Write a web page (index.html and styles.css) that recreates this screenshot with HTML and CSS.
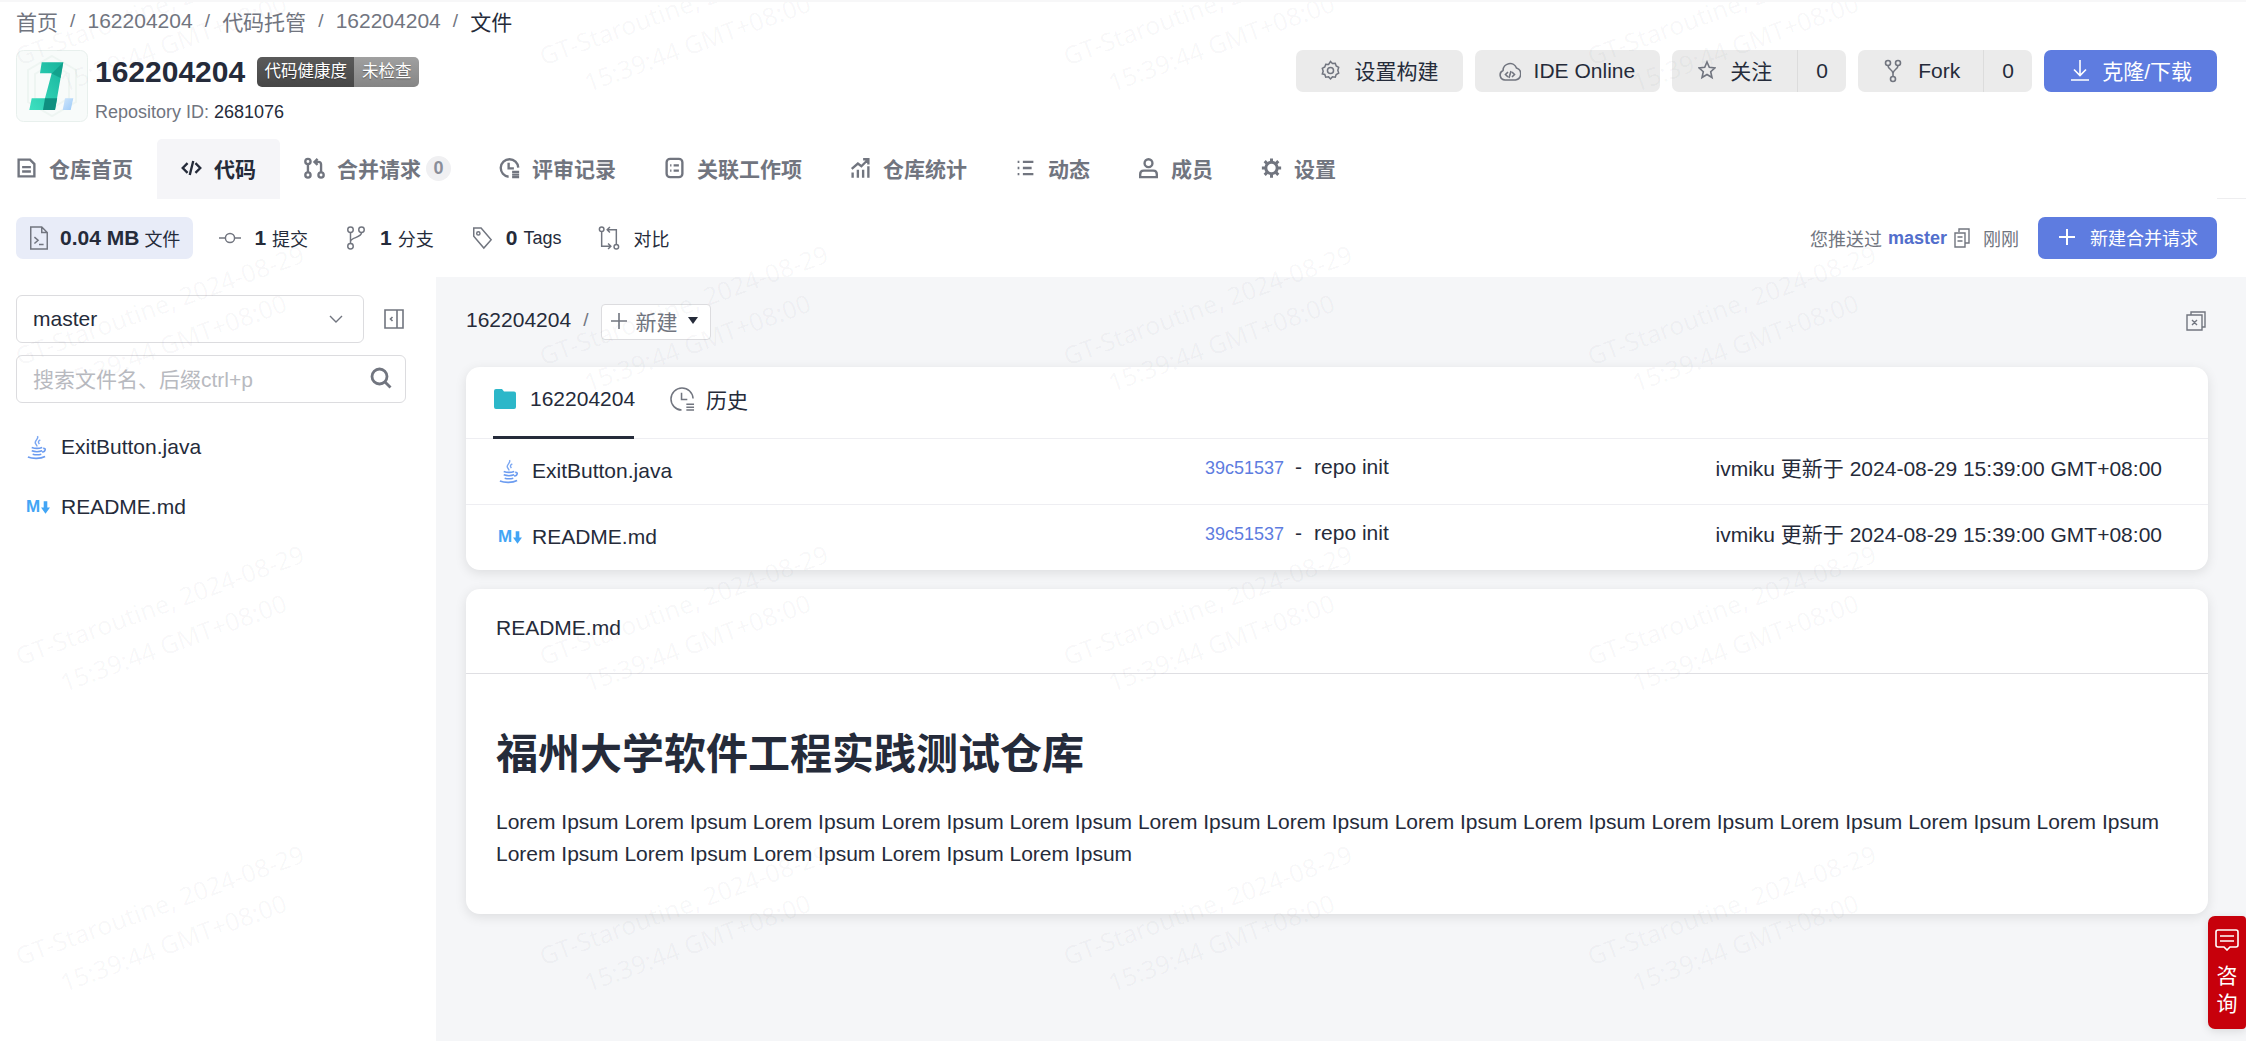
FILE: index.html
```html
<!DOCTYPE html>
<html lang="zh-CN">
<head>
<meta charset="utf-8">
<title>162204204</title>
<link rel="stylesheet" href="styles.css">
</head>
<body>
<div class="page">
  <header class="repo-head">
    <nav class="crumbs">
      <span>首页</span><i>/</i><span>162204204</span><i>/</i><span>代码托管</span><i>/</i><span>162204204</span><i>/</i><span class="here">文件</span>
    </nav>
    <div class="title-row">
      <svg class="logo" viewBox="0 0 72 72">
        <defs>
          <linearGradient id="lg1" x1="0" y1="1" x2="1" y2="0"><stop offset="0" stop-color="#3ee0c0"/><stop offset="1" stop-color="#16b39c"/></linearGradient>
          <linearGradient id="lg2" x1="0" y1="0" x2="1" y2="1"><stop offset="0" stop-color="#cfe6fc"/><stop offset="1" stop-color="#9ccaf8"/></linearGradient>
        </defs>
        <rect x=".5" y=".5" width="71" height="71" rx="7" fill="#f8fbfa" stroke="#e8f0ed"/>
        <path d="M36 6 60 20V52L36 66 12 52V20Z" fill="none" stroke="#eef5f2" stroke-width="2"/>
        <path d="M36 14 53 24V48L36 58 19 48V24Z" fill="none" stroke="#eef5f2" stroke-width="2"/>
        <path d="M25.7 12.3H47.3L39 60H13.3L15.7 48.3H29L35.7 23.3H24Z" fill="url(#lg1)"/>
        <path d="M36 23.3 47.3 12.3 44.6 28 35 23.3Z" fill="#0f9a86" opacity=".75"/>
        <path d="M29 48.3H41.2L39 60H27Z" fill="#0f8f80"/>
        <path d="M49 48.3H57.3L54.7 60H46.7Z" fill="url(#lg2)"/>
      </svg>
      <div class="repo-info">
        <div class="name-line">
          <h2 class="repo-name">162204204</h2>
          <span class="health"><b>代码健康度</b><em>未检查</em></span>
        </div>
        <div class="repo-id">Repository ID: <span>2681076</span></div>
      </div>
      <div class="actions">
        <a class="btn b-build"><svg class="bi gear" viewBox="0 0 20 22"><path d="M10 1.5l2 2.2 3-.3 1 2.8 2.6 1.6-.9 2.9.9 3-2.6 1.5-1 2.8-3-.3-2 2.2-2-2.2-3 .3-1-2.8L1.400 14.700l.9-3-.9-2.900L4 7.200l1-2.800 3 .3z"/><circle cx="10" cy="11" r="3.200"/></svg>设置构建</a>
        <a class="btn b-ide"><svg class="bi ide" viewBox="0 0 22 24"><path d="M6 21a5 5 0 0 1-2-9.500A7 7 0 0 1 17.500 9 6.200 6.200 0 0 1 16.500 21z"/><path d="M9 13l-2.500 2.500L9 18M13 13l2.500 2.500L13 18M12 12l-2 7"/></svg>IDE Online</a>
        <div class="btn split">
          <a class="s-main b-star"><svg class="bi star" viewBox="0 0 18 20"><path d="M9 2l2.300 5.300 5.700.6-4.300 3.800 1.300 5.800L9 14.500l-5 3 1.300-5.800L1 7.900l5.700-.6z"/></svg>关注</a>
          <span class="s-count">0</span>
        </div>
        <div class="btn split">
          <a class="s-main b-fork"><svg class="bi fork" viewBox="0 0 18 24"><circle cx="4" cy="4" r="2.500"/><circle cx="14" cy="4" r="2.500"/><circle cx="9" cy="20" r="2.500"/><path d="M4 6.500c0 4 5 4 5 8v3M14 6.500c0 4-5 4-5 8"/></svg>Fork</a>
          <span class="s-count">0</span>
        </div>
        <a class="btn primary b-clone"><svg class="bi dl" viewBox="0 0 20 22"><path d="M10 1v15M4 10.500l6 6 6-6M1 21h18"/></svg>克隆/下载</a>
      </div>
    </div>
  </header>

  <nav class="tabs">
    <a class="tab"><svg class="ti" viewBox="0 0 24 24"><path d="M3 2.500h13l5 5v14H3zM7 11h10M7 16h10"/></svg>仓库首页</a>
    <a class="tab active"><svg class="ti" viewBox="0 0 24 24"><path d="M7.500 6.500 2 12l5.500 5.500M16.500 6.500 22 12l-5.500 5.500M14 4l-4 16"/></svg>代码</a>
    <a class="tab"><svg class="ti" viewBox="0 0 24 24"><circle cx="4.500" cy="4.500" r="3"/><circle cx="4.500" cy="20" r="3"/><circle cx="19.500" cy="20" r="3"/><path d="M4.500 7.500V17M19.500 17V8q0-3-3-3h-3M15.500 1.500 12 5l3.500 3.500"/></svg>合并请求<span class="pill">0</span></a>
    <a class="tab"><svg class="ti" viewBox="0 0 24 24"><path d="M22 11.500A10 10 0 1 0 11 22"/><path d="M11 6v6.500h6M15 16.500h8M15 19.500h8M15 22.500h8"/></svg>评审记录</a>
    <a class="tab"><svg class="ti" viewBox="0 0 24 24"><rect x="3" y="1.500" width="18" height="21" rx="4"/><path d="M7 9h1.500M11 9h6M7 15h1.500M11 15h6"/></svg>关联工作项</a>
    <a class="tab"><svg class="ti" viewBox="0 0 24 24"><path d="M3 23v-6M9 23v-9M15 23v-9M21 23V10M2 13l7-6 4 3 8-8M15 2h6v6"/></svg>仓库统计</a>
    <a class="tab"><svg class="ti" viewBox="0 0 24 24"><path d="M3 5h2M3 12h2M3 19h2M9 5h12M9 12h10M9 19h12"/></svg>动态</a>
    <a class="tab"><svg class="ti" viewBox="0 0 24 24"><circle cx="12" cy="6.500" r="4.500"/><path d="M2.500 22.500V19q0-4 4-4h11q4 0 4 4v3.500z"/></svg>成员</a>
    <a class="tab"><svg class="ti cog" viewBox="0 0 24 24"><circle cx="12" cy="12" r="6.500"/><path d="M12 1v4M12 19v4M1 12h4M19 12h4M4.200 4.200 7 7M17 17l2.800 2.800M4.200 19.800 7 17M17 7l2.800-2.800"/></svg>设置</a>
  </nav>

  <div class="subbar">
    <a class="chip"><svg class="si" viewBox="0 0 24 26"><path d="M3 1h12l6 6v18H3zM15 1v6h6M7 12l4 3.500L7 19M12 20h5"/></svg><b>0.04 MB</b><span>文件</span></a>
    <a class="stat"><svg class="si" viewBox="0 0 24 24"><circle cx="12" cy="12" r="5"/><path d="M0 12h7M17 12h7"/></svg><b>1</b><span>提交</span></a>
    <a class="stat"><svg class="si" viewBox="0 0 24 26"><circle cx="6" cy="4" r="3"/><circle cx="18" cy="4" r="3"/><circle cx="6" cy="22" r="3"/><path d="M6 7v12M18 7c0 6-12 5-12 10"/></svg><b>1</b><span>分支</span></a>
    <a class="stat"><svg class="si" viewBox="0 0 24 26"><path d="M3 2h8l11 13-8 9L3 11z"/><circle cx="8" cy="8" r="1.800"/></svg><b>0</b><span>Tags</span></a>
    <a class="stat"><svg class="si" viewBox="0 0 24 26"><circle cx="4" cy="3.500" r="2.500"/><circle cx="20" cy="22.500" r="2.500"/><path d="M4 6v16h10M11 19l3 3-3 3M20 20V4H10M13 1 10 4l3 3"/></svg><span class="solo">对比</span></a>
    <div class="push">
      <span>您推送过</span><a class="branch">master</a>
      <svg class="copy" viewBox="0 0 16 20"><path d="M5 4V1h10v14h-4M1 5h10v14H1zM3.500 9h5M3.500 13h5"/></svg>
      <span class="ago">刚刚</span>
      <a class="btn primary small"><svg class="bi plus" viewBox="0 0 18 18"><path d="M9 1v16M1 9h16"/></svg>新建合并请求</a>
    </div>
  </div>

  <div class="content">
    <aside class="side">
      <div class="branch-row">
        <div class="select"><span>master</span><svg class="chev" viewBox="0 0 14 8"><path d="M1 1l6 6 6-6"/></svg></div>
        <svg class="collapse" viewBox="0 0 20 20"><path d="M1 1h18v18H1zM13 1v18M8.500 8 6.500 10l2 2"/></svg>
      </div>
      <div class="search"><span>搜索文件名、后缀ctrl+p</span><svg class="mag" viewBox="0 0 22 22"><circle cx="9.500" cy="9.500" r="7.500"/><path d="M15 15l5.500 5.500"/></svg></div>
      <ul class="tree">
        <li><svg class="java" viewBox="0 0 22 26"><path class="st" d="M12 1c2 3-4 5-2 8 .6 1 1.500 1.500 1.500 3M15 5c-3 1.500-2 3-1 4.500"/><path class="cp" d="M6 13c3 1 8 1 11 0M6 16.500c3 1 8 1 11 0M7 20c3 .8 6 .8 9 0M18 14c3-.5 3 3-1 4M2 23c5 2 13 2 18-.5"/></svg>ExitButton.java</li>
        <li><span class="md">M<svg viewBox="0 0 10 14"><path d="M3 0h4v7h3l-5 7-5-7h3z"/></svg></span>README.md</li>
      </ul>
    </aside>
    <main class="main">
      <div class="path-row">
        <span class="root">162204204</span><i>/</i>
        <a class="new"><svg class="nplus" viewBox="0 0 18 18"><path d="M9 1v16M1 9h16"/></svg>新建<span class="caret"></span></a>
        <svg class="xfile" viewBox="0 0 20 20"><path d="M5 4V1h14v15h-3M1 4h15v15H1zM6 9l5 5M11 9l-5 5"/></svg>
      </div>
      <section class="card files">
        <div class="card-tabs">
          <a class="ctab on"><svg class="folder" viewBox="0 0 22 20"><path d="M0 2q0-2 2-2h6l2 2.500h10q2 0 2 2V18q0 2-2 2H2q-2 0-2-2z"/></svg>162204204</a>
          <a class="ctab"><svg class="hist" viewBox="0 0 26 26"><path d="M24 12A11.500 11.500 0 1 0 12 24"/><path d="M12 6v7h6M17 18h8M17 21h8M17 24h8"/></svg>历史</a>
        </div>
        <div class="row">
          <div class="fname"><svg class="java" viewBox="0 0 22 26"><path class="st" d="M12 1c2 3-4 5-2 8 .6 1 1.500 1.500 1.500 3M15 5c-3 1.500-2 3-1 4.500"/><path class="cp" d="M6 13c3 1 8 1 11 0M6 16.500c3 1 8 1 11 0M7 20c3 .8 6 .8 9 0M18 14c3-.5 3 3-1 4M2 23c5 2 13 2 18-.5"/></svg>ExitButton.java</div>
          <div class="commit"><a>39c51537</a><span class="dash">-</span>repo init</div>
          <div class="when">ivmiku 更新于 2024-08-29 15:39:00 GMT+08:00</div>
        </div>
        <div class="row">
          <div class="fname"><span class="md">M<svg viewBox="0 0 10 14"><path d="M3 0h4v7h3l-5 7-5-7h3z"/></svg></span>README.md</div>
          <div class="commit"><a>39c51537</a><span class="dash">-</span>repo init</div>
          <div class="when">ivmiku 更新于 2024-08-29 15:39:00 GMT+08:00</div>
        </div>
      </section>
      <section class="card readme">
        <div class="readme-head">README.md</div>
        <article class="readme-body">
          <h1>福州大学软件工程实践测试仓库</h1>
          <p>Lorem Ipsum Lorem Ipsum Lorem Ipsum Lorem Ipsum Lorem Ipsum Lorem Ipsum Lorem Ipsum Lorem Ipsum Lorem Ipsum Lorem Ipsum Lorem Ipsum Lorem Ipsum Lorem Ipsum Lorem Ipsum Lorem Ipsum Lorem Ipsum Lorem Ipsum Lorem Ipsum</p>
        </article>
      </section>
    </main>
  </div>

  <div class="watermarks" aria-hidden="true">
    <div class="wm">GT-Staroutine, 2024-08-29<br>15:39:44 GMT+08:00</div><div class="wm">GT-Staroutine, 2024-08-29<br>15:39:44 GMT+08:00</div><div class="wm">GT-Staroutine, 2024-08-29<br>15:39:44 GMT+08:00</div><div class="wm">GT-Staroutine, 2024-08-29<br>15:39:44 GMT+08:00</div>
    <div class="wm">GT-Staroutine, 2024-08-29<br>15:39:44 GMT+08:00</div><div class="wm">GT-Staroutine, 2024-08-29<br>15:39:44 GMT+08:00</div><div class="wm">GT-Staroutine, 2024-08-29<br>15:39:44 GMT+08:00</div><div class="wm">GT-Staroutine, 2024-08-29<br>15:39:44 GMT+08:00</div>
    <div class="wm">GT-Staroutine, 2024-08-29<br>15:39:44 GMT+08:00</div><div class="wm">GT-Staroutine, 2024-08-29<br>15:39:44 GMT+08:00</div><div class="wm">GT-Staroutine, 2024-08-29<br>15:39:44 GMT+08:00</div><div class="wm">GT-Staroutine, 2024-08-29<br>15:39:44 GMT+08:00</div>
    <div class="wm">GT-Staroutine, 2024-08-29<br>15:39:44 GMT+08:00</div><div class="wm">GT-Staroutine, 2024-08-29<br>15:39:44 GMT+08:00</div><div class="wm">GT-Staroutine, 2024-08-29<br>15:39:44 GMT+08:00</div><div class="wm">GT-Staroutine, 2024-08-29<br>15:39:44 GMT+08:00</div>
  </div>

  <a class="consult">
    <svg viewBox="0 0 24 22"><path d="M3 1h18q2 0 2 2v13q0 2-2 2h-6l-3 3-3-3H3q-2 0-2-2V3q0-2 2-2zM5 7h14M5 12h14"/></svg>
    <span>咨</span><span>询</span>
  </a>
</div>
</body>
</html>
```

FILE: styles.css
```css
* { box-sizing: border-box; }
html, body { margin: 0; padding: 0; }
body {
  font-family: "Liberation Sans", "Noto Sans CJK SC", sans-serif;
  font-size: 21px;
  color: #252b3a;
  background: #fff;
}
a { color: inherit; text-decoration: none; }
i { font-style: normal; }
svg { flex: none; display: block; }

.page {
  position: relative;
  width: 2246px;
  height: 1041px;
  overflow: hidden;
  display: flex;
  flex-direction: column;
  border-top: 2px solid #f7f7f8;
}

/* header */
.repo-head { padding: 1px 29px 0 16px; }
.crumbs {
  display: flex;
  align-items: center;
  height: 38px;
  padding-bottom: 2px;
  color: #71757f;
}
.crumbs i { width: 29.5px; text-align: center; font-size: 19px; }
.crumbs .here { color: #252b3a; }

.title-row { display: flex; height: 80px; margin-top: 9px; }
.logo { width: 72px; height: 72px; }
.repo-info { margin-left: 7px; }
.name-line { display: flex; align-items: center; height: 44px; }
.repo-name { margin: 0; font-size: 30px; line-height: 44px; font-weight: 700; }
.health {
  display: flex;
  margin-left: 12px;
  height: 30px;
  border-radius: 5px;
  overflow: hidden;
  font-size: 16.5px;
  line-height: 29px;
  color: #fff;
  text-shadow: 0 1px 1px rgba(0, 0, 0, .35);
}
.health b {
  width: 97px;
  text-align: center;
  font-weight: 400;
  background: linear-gradient(#5a5a5a, #474747);
}
.health em {
  width: 65px;
  text-align: center;
  font-style: normal;
  background: linear-gradient(#a0a0a0, #858585);
}
.repo-id { font-size: 18px; line-height: 36px; color: #71757f; }
.repo-id span { color: #252b3a; }

.actions { display: flex; gap: 12px; margin-left: auto; align-self: flex-start; }
.btn {
  display: flex;
  align-items: center;
  height: 42px;
  background: #ebebeb;
  border-radius: 7px;
  white-space: nowrap;
}
.bi { fill: none; stroke: #71757f; stroke-width: 1.6; }
.b-build { padding: 0 24px 2px 25px; }
.gear { width: 19px; height: 21px; margin-right: 15px; }
.b-ide { padding: 0 25px 0 24px; }
.ide { width: 22px; height: 24px; margin-right: 13px; }
.split { padding: 0; }
.s-main { display: flex; align-items: center; height: 42px; border-right: 1px solid #dcdcdc; }
.s-count { width: 48px; text-align: center; }
.b-star { width: 126px; padding: 0 0 2px 26px; }
.star { width: 18px; height: 20px; margin-right: 14px; }
.b-fork { width: 126px; padding-left: 26px; }
.fork { width: 18px; height: 24px; margin-right: 16px; }
.primary { background: #5e7ce0; color: #fff; }
.primary .bi { stroke: #fff; }
.b-clone { padding: 0 25px 2px 26px; }
.dl { width: 20px; height: 22px; margin-right: 12px; }

/* tabs */
.tabs {
  position: relative;
  display: flex;
  height: 60px;
  margin: 9px 0 0 -8px;
  color: #71757f;
  font-weight: 700;
}
.tabs::after {
  content: "";
  position: absolute;
  right: 0;
  bottom: 0;
  width: 29px;
  height: 1px;
  background: #eeeef0;
}
.tab {
  display: flex;
  align-items: center;
  padding: 0 24px 2px;
  white-space: nowrap;
}
.ti {
  width: 21px;
  height: 22px;
  margin-right: 12px;
  fill: none;
  stroke: currentColor;
  stroke-width: 2.7;
}
.cog { stroke-width: 3.4; }
.tab.active {
  color: #252b3a;
  background: #f5f5f8;
  border-radius: 5px 5px 0 0;
}
.pill {
  min-width: 25px;
  height: 25px;
  margin-left: 5px;
  border-radius: 13px;
  background: #f0f0f2;
  font-size: 18px;
  line-height: 25px;
  text-align: center;
  color: #8a8e99;
}

/* sub bar */
.subbar {
  display: flex;
  align-items: center;
  height: 78px;
  padding: 0 29px 0 16px;
}
.chip {
  display: flex;
  align-items: center;
  height: 42px;
  padding: 0 13px 0 12px;
  border-radius: 7px;
  background: #e8ecf8;
}
.chip .si { margin-right: 10px; }
.stat { display: flex; align-items: center; }
.stat + .stat { margin-left: 37px; }
.chip + .stat { margin-left: 26px; }
.si {
  width: 22px;
  height: 24px;
  margin-right: 13px;
  fill: none;
  stroke: #71757f;
  stroke-width: 1.6;
}
.chip b, .stat b { font-weight: 700; }
.chip span { margin-left: 5px; font-size: 18px; }
.stat span { margin-left: 6px; font-size: 18px; }
.stat .solo { margin-left: 0; }
.push {
  display: flex;
  align-items: center;
  margin-left: auto;
  font-size: 18px;
  color: #71757f;
}
.branch { margin-left: 6px; font-weight: 700; color: #526ecc; }
.copy {
  width: 16px;
  height: 20px;
  margin-left: 7px;
  fill: none;
  stroke: #71757f;
  stroke-width: 1.4;
}
.ago { margin-left: 13px; }
.small {
  margin-left: 19px;
  padding: 0 19px 2px 20px;
  font-size: 18px;
}
.plus { width: 18px; height: 18px; margin-right: 14px; stroke-width: 2; }

/* content */
.content { flex: 1; display: flex; background: #f5f6f8; min-height: 0; }
.side { width: 436px; padding: 18px 16px 0; background: #fff; }
.branch-row { display: flex; align-items: center; }
.select {
  display: flex;
  align-items: center;
  justify-content: space-between;
  width: 348px;
  height: 48px;
  padding: 0 20px 0 16px;
  border: 1px solid #dcdcdf;
  border-radius: 6px;
}
.chev { width: 14px; height: 8px; fill: none; stroke: #71757f; stroke-width: 1.4; }
.collapse {
  width: 20px;
  height: 20px;
  margin-left: 20px;
  fill: none;
  stroke: #71757f;
  stroke-width: 1.6;
}
.search {
  display: flex;
  align-items: center;
  justify-content: space-between;
  width: 390px;
  height: 48px;
  margin-top: 12px;
  padding: 0 13px 2px 16px;
  border: 1px solid #dcdcdf;
  border-radius: 6px;
  color: #b8bac0;
}
.mag { width: 22px; height: 22px; fill: none; stroke: #71757f; stroke-width: 2.8; }
.tree { list-style: none; margin: 14px 0 0; padding: 0 0 0 10px; }
.tree li { display: flex; align-items: center; height: 60px; }
.java { width: 21px; height: 25px; margin-right: 13px; fill: none; }
.tree .java { margin-right: 14px; }
.java .st { stroke: #7ba7f2; stroke-width: 1.5; }
.java .cp { stroke: #6c9cf0; stroke-width: 1.7; }
.md {
  display: flex;
  align-items: center;
  gap: 1px;
  width: 35px;
  font-size: 17px;
  font-weight: 700;
  color: #42a5f5;
}
.md svg { width: 9px; height: 13px; fill: #42a5f5; }

.main { flex: 1; padding: 27px 38px 0 30px; min-width: 0; }
.path-row { display: flex; align-items: center; height: 36px; }
.path-row .root { padding-bottom: 4px; }
.path-row i { margin: 0 13px 0 12px; padding-bottom: 4px; font-size: 19px; color: #71757f; }
.new {
  display: flex;
  align-items: center;
  width: 110px;
  height: 36px;
  padding: 0 0 3px 8px;
  border: 1px solid #dcdcdf;
  border-radius: 4px;
  background: #fff;
  color: #71757f;
}
.nplus { width: 18px; height: 18px; margin-right: 7px; fill: none; stroke: #71757f; stroke-width: 1.6; }
.caret {
  width: 0;
  height: 0;
  margin-left: 11px;
  border: 5.5px solid transparent;
  border-top: 7px solid #252b3a;
  border-bottom: 0;
}
.xfile {
  width: 20px;
  height: 20px;
  margin: 0 2px 3px auto;
  fill: none;
  stroke: #71757f;
  stroke-width: 1.4;
}

.card {
  background: #fff;
  border-radius: 14px;
  box-shadow: 0 3px 12px rgba(0, 0, 0, .1);
}
.files { height: 203px; margin-top: 27px; }
.card-tabs {
  display: flex;
  height: 72px;
  padding-left: 27px;
  border-bottom: 1px solid #eeeef2;
}
.ctab { display: flex; align-items: center; height: 72px; padding-bottom: 5px; }
.ctab.on { width: 141px; border-bottom: 3px solid #252b3a; }
.ctab + .ctab { margin-left: 36px; padding-bottom: 8px; }
.folder { width: 22px; height: 20px; margin-left: 1px; margin-right: 14px; fill: #2cb7c9; }
.hist { width: 25px; height: 25px; margin-right: 11px; fill: none; stroke: #71757f; stroke-width: 1.6; }
.row {
  display: flex;
  align-items: center;
  height: 66px;
  padding: 0 46px 0 32px;
  border-top: 1px solid #eeeef2;
}
.card-tabs + .row { height: 65px; border-top: 0; }
.fname { display: flex; align-items: center; width: 707px; padding-bottom: 1px; }
.commit { width: 510px; padding-bottom: 10px; white-space: nowrap; }
.commit a { font-size: 18px; color: #5e7ce0; }
.dash { margin: 0 12px 0 11px; }
.when { flex: 1; padding-bottom: 10px; text-align: right; white-space: nowrap; }
.fname .md { width: 34px; }

.readme { height: 325px; margin-top: 19px; }
.readme-head {
  height: 85px;
  padding: 0 30px;
  border-bottom: 1px solid #dfdfe3;
  line-height: 78px;
}
.readme-body { padding: 49px 30px 44px; }
.readme-body h1 {
  margin: 0;
  font-size: 42px;
  line-height: 63px;
  font-weight: 700;
}
.readme-body p { margin: 20px 0 0; line-height: 32px; }

/* watermark */
.watermarks {
  position: absolute;
  inset: 0;
  padding: 37px 0 0 6px;
  display: grid;
  grid-template-columns: repeat(4, 524px);
  grid-auto-rows: 300px;
  pointer-events: none;
}
.wm {
  width: 312px;
  height: 80px;
  font-family: "Noto Sans", sans-serif;
  font-size: 25px;
  line-height: 40px;
  text-align: center;
  white-space: nowrap;
  color: rgba(40, 50, 70, .04);
  transform-origin: 0 0;
  transform: rotate(-20deg);
}

/* consult */
.consult {
  position: absolute;
  right: 0;
  top: 914px;
  width: 38px;
  height: 113px;
  padding-top: 13px;
  display: flex;
  flex-direction: column;
  align-items: center;
  background: #c7000b;
  border-radius: 7px 4px 4px 7px;
  box-shadow: 0 2px 10px rgba(0, 0, 0, .12);
  color: #fff;
  line-height: 28px;
}
.consult svg {
  width: 24px;
  height: 22px;
  margin-bottom: 11px;
  fill: none;
  stroke: #fff;
  stroke-width: 1.6;
}
```
